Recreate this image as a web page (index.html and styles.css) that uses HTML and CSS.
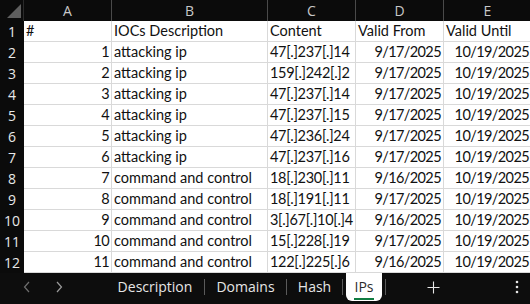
FILE: index.html
```html
<!DOCTYPE html>
<html lang="en">
<head>
  <meta charset="UTF-8">
  <meta name="viewport" content="width=device-width, initial-scale=1.0">
  <title>IOCs - IPs</title>
  <link rel="stylesheet" href="styles.css">
</head>
<body>
  <div class="sheet">
    <table class="grid">
      <colgroup>
        <col class="col-head">
        <col class="col-a">
        <col class="col-b">
        <col class="col-c">
        <col class="col-d">
        <col class="col-e">
      </colgroup>
      <thead>
        <tr>
          <th class="corner">
            <svg width="24" height="21" viewBox="0 0 24 21"><polygon points="21,4 21,18 7,18" fill="#5f5f5f"/></svg>
          </th>
          <th>A</th>
          <th>B</th>
          <th>C</th>
          <th>D</th>
          <th>E</th>
        </tr>
      </thead>
      <tbody>
        <tr><th>1</th><td>#</td><td>IOCs Description</td><td>Content</td><td>Valid From</td><td>Valid Until</td></tr>
        <tr><th>2</th><td class="num">1</td><td>attacking ip</td><td class="ip">47[.]237[.]14</td><td class="num">9/17/2025</td><td class="num">10/19/2025</td></tr>
        <tr><th>3</th><td class="num">2</td><td>attacking ip</td><td class="ip">159[.]242[.]2</td><td class="num">9/17/2025</td><td class="num">10/19/2025</td></tr>
        <tr><th>4</th><td class="num">3</td><td>attacking ip</td><td class="ip">47[.]237[.]14</td><td class="num">9/17/2025</td><td class="num">10/19/2025</td></tr>
        <tr><th>5</th><td class="num">4</td><td>attacking ip</td><td class="ip">47[.]237[.]15</td><td class="num">9/17/2025</td><td class="num">10/19/2025</td></tr>
        <tr><th>6</th><td class="num">5</td><td>attacking ip</td><td class="ip">47[.]236[.]24</td><td class="num">9/17/2025</td><td class="num">10/19/2025</td></tr>
        <tr><th>7</th><td class="num">6</td><td>attacking ip</td><td class="ip">47[.]237[.]16</td><td class="num">9/17/2025</td><td class="num">10/19/2025</td></tr>
        <tr><th>8</th><td class="num">7</td><td>command and control</td><td class="ip">18[.]230[.]11</td><td class="num">9/16/2025</td><td class="num">10/19/2025</td></tr>
        <tr><th>9</th><td class="num">8</td><td>command and control</td><td class="ip">18[.]191[.]11</td><td class="num">9/17/2025</td><td class="num">10/19/2025</td></tr>
        <tr><th>10</th><td class="num">9</td><td>command and control</td><td class="ip">3[.]67[.]10[.]4</td><td class="num">9/16/2025</td><td class="num">10/19/2025</td></tr>
        <tr><th>11</th><td class="num">10</td><td>command and control</td><td class="ip">15[.]228[.]19</td><td class="num">9/17/2025</td><td class="num">10/19/2025</td></tr>
        <tr><th>12</th><td class="num">11</td><td>command and control</td><td class="ip">122[.]225[.]6</td><td class="num">9/16/2025</td><td class="num">10/19/2025</td></tr>
      </tbody>
    </table>
  </div>

  <div class="tabbar">
    <div class="nav">
      <svg class="arrow dim" width="8" height="12" viewBox="0 0 8 12"><polyline points="6,1 1.5,6 6,11" fill="none" stroke="currentColor" stroke-width="1.2"/></svg>
      <svg class="arrow" width="8" height="12" viewBox="0 0 8 12"><polyline points="2,1 6.5,6 2,11" fill="none" stroke="currentColor" stroke-width="1.2"/></svg>
    </div>
    <div class="tab tab-description">Description</div>
    <div class="sep"></div>
    <div class="tab tab-domains">Domains</div>
    <div class="sep"></div>
    <div class="tab tab-hash">Hash</div>
    <div class="sep"></div>
    <div class="tab active"><span>IPs</span></div>
    <div class="sep"></div>
    <div class="add">
      <svg width="13" height="13" viewBox="0 0 13 13"><path d="M6.5 0.5v12M0.5 6.5h12" stroke="#e6e6e6" stroke-width="1.1"/></svg>
    </div>
    <div class="more">
      <svg width="4" height="14" viewBox="0 0 4 14"><circle cx="2" cy="2" r="1.3" fill="#e6e6e6"/><circle cx="2" cy="7" r="1.3" fill="#e6e6e6"/><circle cx="2" cy="12" r="1.3" fill="#e6e6e6"/></svg>
    </div>
  </div>
</body>
</html>
```

FILE: styles.css
```css
body {
  margin: 0;
  width: 530px;
  height: 304px;
  overflow: hidden;
  background: #0d0d0d;
  font-family: Lato, 'Liberation Sans', sans-serif;
}
.sheet {
  height: 273px;
  overflow: hidden;
  background: #ffffff;
}
.grid {
  border-collapse: separate;
  border-spacing: 0;
  table-layout: fixed;
  width: 532px;
}
.col-head { width: 24px; }
.col-a { width: 88px; }
.col-b { width: 156px; }
.col-c { width: 88px; }
.col-d { width: 88px; }
.col-e { width: 88px; }
.grid thead th {
  height: 21px;
  padding: 0;
  box-sizing: border-box;
  background: #0b0b0b;
  border-right: 1px solid #4a4a4a;
  color: #c8c8c8;
  font-family: 'Open Sans', sans-serif;
  font-weight: 400;
  font-size: 14px;
  line-height: 20px;
  text-align: center;
}
.grid thead th.corner {
  border-right: 1px solid #2a2a2a;
  line-height: 0;
}
.grid tbody th {
  height: 21px;
  padding: 0;
  box-sizing: border-box;
  background: #0b0b0b;
  color: #e8e8e8;
  font-family: 'Open Sans', sans-serif;
  font-weight: 400;
  font-size: 14px;
  line-height: 20px;
  text-align: center;
}
.grid td {
  height: 21px;
  padding: 0 2px;
  box-sizing: border-box;
  border-right: 1px solid #d9d9d9;
  border-bottom: 1px solid #d9d9d9;
  color: #111111;
  font-size: 14.5px;
  line-height: 20px;
  white-space: nowrap;
  overflow: hidden;
  text-overflow: clip;
}
.grid td.num {
  text-align: right;
  letter-spacing: -0.6px;
}
.grid td.ip {
  letter-spacing: -0.3px;
}
.tabbar {
  height: 31px;
  display: flex;
  align-items: flex-start;
  background: #0d0d0d;
  color: #e6e6e6;
  font-family: 'Open Sans', sans-serif;
  font-size: 14px;
}
.nav {
  width: 106px;
  height: 28px;
  display: flex;
  align-items: center;
  gap: 24px;
  padding-left: 23px;
  box-sizing: border-box;
}
.arrow {
  color: #9a9a9a;
}
.arrow.dim {
  color: #6e6e6e;
}
.tab {
  height: 28px;
  line-height: 28px;
  text-align: center;
  white-space: nowrap;
}
.tab-description { width: 98px; }
.tab-domains { width: 81px; }
.tab-hash { width: 55px; }
.sep {
  width: 1px;
  height: 16px;
  margin-top: 6px;
  background: #5a5a5a;
}
.tab.active {
  width: 36px;
  background: #ffffff;
  color: #2b2b2b;
  border-radius: 0 0 6px 6px;
  margin: 0 3px;
}
.tab.active span {
  display: inline-block;
  line-height: 22px;
  margin-top: 3px;
  border-bottom: 2px solid #107c41;
}
.add {
  width: 94px;
  height: 28px;
  display: flex;
  align-items: center;
  justify-content: center;
}
.more {
  flex: 1;
  height: 28px;
  display: flex;
  align-items: center;
  justify-content: flex-end;
  padding-right: 11px;
}
```
